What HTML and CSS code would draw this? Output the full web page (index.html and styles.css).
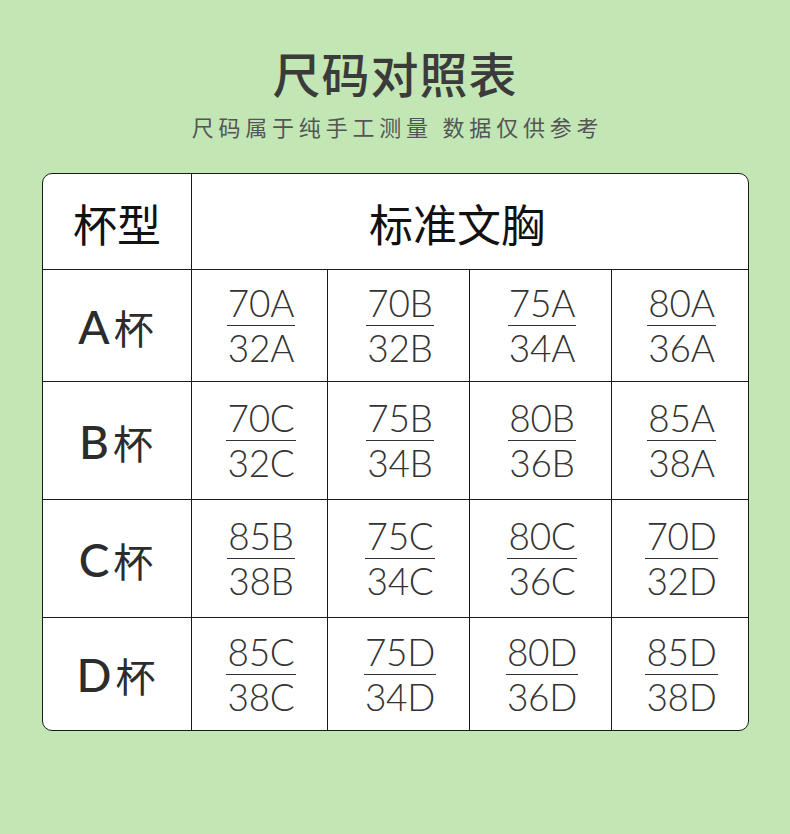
FILE: index.html
```html
<!DOCTYPE html>
<html lang="zh-CN">
<head>
<meta charset="utf-8">
<title>尺码对照表</title>
<link rel="stylesheet" href="styles.css">
</head>
<body>
<div class="page">
  <h1 class="title">尺码对照表</h1>
  <p class="subtitle">尺码属于纯手工测量 数据仅供参考</p>
  <div class="table">
    <div class="cell head first">杯型</div>
    <div class="cell head span">标准文胸</div>

    <div class="cell label first row1"><span class="lat">A</span><span class="cup">杯</span></div>
    <div class="cell row1"><div class="frac"><span class="num">70A</span><span class="den">32A</span></div></div>
    <div class="cell row1"><div class="frac"><span class="num">70B</span><span class="den">32B</span></div></div>
    <div class="cell row1"><div class="frac"><span class="num">75A</span><span class="den">34A</span></div></div>
    <div class="cell row1"><div class="frac"><span class="num">80A</span><span class="den">36A</span></div></div>

    <div class="cell label first"><span class="lat">B</span><span class="cup">杯</span></div>
    <div class="cell"><div class="frac"><span class="num">70C</span><span class="den">32C</span></div></div>
    <div class="cell"><div class="frac"><span class="num">75B</span><span class="den">34B</span></div></div>
    <div class="cell"><div class="frac"><span class="num">80B</span><span class="den">36B</span></div></div>
    <div class="cell"><div class="frac"><span class="num">85A</span><span class="den">38A</span></div></div>

    <div class="cell label first"><span class="lat">C</span><span class="cup">杯</span></div>
    <div class="cell"><div class="frac"><span class="num">85B</span><span class="den">38B</span></div></div>
    <div class="cell"><div class="frac"><span class="num">75C</span><span class="den">34C</span></div></div>
    <div class="cell"><div class="frac"><span class="num">80C</span><span class="den">36C</span></div></div>
    <div class="cell"><div class="frac"><span class="num">70D</span><span class="den">32D</span></div></div>

    <div class="cell label first"><span class="lat">D</span><span class="cup">杯</span></div>
    <div class="cell"><div class="frac"><span class="num">85C</span><span class="den">38C</span></div></div>
    <div class="cell"><div class="frac"><span class="num">75D</span><span class="den">34D</span></div></div>
    <div class="cell"><div class="frac"><span class="num">80D</span><span class="den">36D</span></div></div>
    <div class="cell"><div class="frac"><span class="num">85D</span><span class="den">38D</span></div></div>
  </div>
</div>
</body>
</html>
```

FILE: styles.css
```css
* { box-sizing: border-box; }
html, body {
  margin: 0;
  padding: 0;
  background: #c3e6b5;
}
body {
  width: 790px;
  height: 834px;
  overflow: hidden;
  font-family: "Noto Sans CJK SC", "Noto Sans", sans-serif;
}
.page {
  display: flex;
  flex-direction: column;
  align-items: center;
  padding-top: 43px;
}
.title {
  margin: 0;
  font-size: 48px;
  line-height: 58px;
  font-weight: 500;
  color: #3b3b3b;
  letter-spacing: 1px;
}
.subtitle {
  margin: 0;
  margin-top: 10px;
  font-size: 22px;
  line-height: 30px;
  font-weight: 400;
  color: #555;
  letter-spacing: 4.8px;
  padding-left: 5px;
}
.table {
  align-self: flex-start;
  margin-top: 32px;
  margin-left: 42px;
  width: 707px;
  height: 558px;
  border: 1px solid #1a1a1a;
  border-radius: 10px;
  overflow: hidden;
  background: #ffffff;
  display: grid;
  grid-template-columns: 148px 136px 142px 142px 137px;
  grid-template-rows: 95px 112px 118px 118px 113px;
}
.cell {
  display: flex;
  align-items: center;
  justify-content: center;
  border-left: 1px solid #1a1a1a;
  border-top: 1px solid #1a1a1a;
}
.cell.first { border-left: none; }
.cell.head { border-top: none; }
.head {
  font-size: 44px;
  font-weight: 400;
  color: #111;
  letter-spacing: 0;
}
.head.first { padding-top: 2px; }
.head.span {
  grid-column: 2 / 6;
  padding-top: 2px;
  padding-right: 26px;
}
.label {
  color: #2c2c2c;
  padding-top: 2px;
  padding-right: 2px;
}
.lat {
  font-family: "Lato", "DejaVu Sans", sans-serif;
  font-size: 46px;
  font-weight: 500;
  line-height: 1;
  margin-right: 4px;
}
.cup {
  font-size: 40px;
  line-height: 1;
  font-weight: 400;
}
.frac {
  display: flex;
  flex-direction: column;
  align-items: center;
  font-family: "Lato", "DejaVu Sans", sans-serif;
  font-weight: 300;
  font-size: 37px;
  color: #333;
  padding-left: 3px;
}
.num {
  line-height: 40px;
  padding: 0 1px 2px;
  border-bottom: 1.5px solid #333;
  letter-spacing: -0.3px;
}
.den {
  line-height: 40px;
  padding-top: 2px;
  letter-spacing: -0.3px;
}
```
